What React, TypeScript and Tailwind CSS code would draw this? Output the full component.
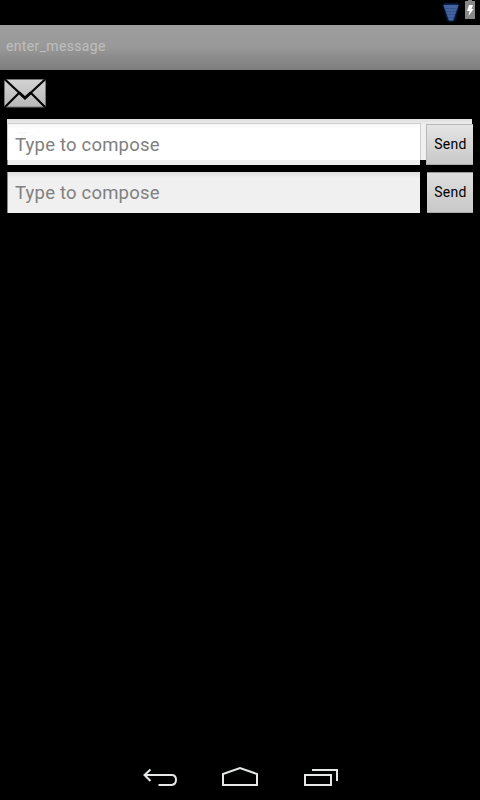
function StatusBar() {
  return (
    <header className="flex h-[25px] items-start justify-end bg-black">
      <svg width="40" height="25" viewBox="440 0 40 25">
        <defs>
          <filter id="glow" x="-50%" y="-50%" width="200%" height="200%">
            <feGaussianBlur stdDeviation="1.2" />
          </filter>
        </defs>
        <path d="M443 4H459L454 21H448Z" fill="#163b78" filter="url(#glow)" />
        <path d="M443.5 5H458.5L453 20.5H449Z" fill="#45639f" />
        <path d="M444.5 8.5H457.5M446 11.5H456M447 14.5H455M448 17.5H454" stroke="#345490" />
        <path d="M468 0H472V1H475V19H465V1H468Z" fill="#888" />
        <path d="M469 5H473L471.5 9H473.5L468.5 16L469.5 11H467Z" fill="#fff" />
      </svg>
    </header>
  );
}

function MailIcon() {
  return (
    <svg className="block" width="50" height="49" viewBox="0 70 50 49">
      <defs>
        <linearGradient id="mail" x1="0" y1="0" x2="0" y2="1">
          <stop stopColor="#d2d2d2" />
          <stop offset="1" stopColor="#b9b9b9" />
        </linearGradient>
      </defs>
      <rect x="4.5" y="79.5" width="41" height="27.5" rx="1.5" fill="url(#mail)" stroke="#777" />
      <path d="M5 79.5L25 98L45 79.5M5 107L19 93M45 107L31 93" fill="none" stroke="#050505" strokeWidth="2.2" />
      <path d="M19 92.5L25 98L31 92.5" fill="none" stroke="#050505" strokeWidth="2.8" />
    </svg>
  );
}

function ComposeRow({ bright = false }: { bright?: boolean }) {
  return (
    <div className="relative flex h-[41px] gap-[7px] pr-[7px] pl-2">
      <div
        className={
          bright
            ? "relative flex w-[412px] items-center bg-linear-to-b from-[#f8f8f8] via-white via-15% to-white pt-0.5 pl-[7px]"
            : "flex w-[412px] items-center bg-linear-to-b from-[#dedede] via-[#f0f0f0] via-15% to-[#f0f0f0] pt-0.5 pl-[7px] shadow-[-1px_0_0_#888]"
        }
      >
        {bright && (
          <>
            <span className="absolute -top-px -left-px h-[37px] w-[414px] border-x border-t border-[#cecece]" />
            <span className="absolute bottom-0 -left-px h-[5px] w-[413px] border-l border-[#888] bg-[#f0f0f0]" />
            <span className="absolute top-[6px] left-[9px] text-[18px] leading-none text-[#f9f9f9]">To</span>
          </>
        )}
        <span className="relative z-10 text-[18.5px] leading-none tracking-[0.2px] whitespace-nowrap text-[#808080]">Type to compose</span>
      </div>
      <button
        className={
          bright
            ? "w-[46px] bg-linear-to-b from-[#e5e5e5] to-[#c8c8c8] pb-0.5 pl-px text-[14px] leading-none tracking-[0.3px] text-black shadow-[-1px_0_0_#b8b8b8,inset_0_1px_0_#b8b8b8,inset_0_-1px_0_#aaa]"
            : "w-[46px] bg-linear-to-b from-[#dedede] to-[#c8c8c8] pb-0.5 pl-px text-[14px] leading-none tracking-[0.3px] text-black shadow-[inset_0_1px_0_#999,inset_0_-1px_0_#aaa]"
        }
      >
        Send
      </button>
    </div>
  );
}

function NavigationBar() {
  return (
    <nav className="flex h-12 justify-center bg-black">
      <svg width="240" height="48" viewBox="120 752 240 48" fill="none" stroke="#e6e8e8" strokeWidth="2">
        <path d="M150.5 769.5L144.5 775L150.5 781M145 775H171.5Q176 775 176 779.8T171.5 785H158.5" />
        <path d="M223 785V774L240 768L257 774V785Z" />
        <path d="M305 775H331V785H305ZM312 770H337V781" />
      </svg>
    </nav>
  );
}

export default function App() {
  return (
    <div className="flex h-[800px] w-[480px] flex-col overflow-hidden bg-black font-['Roboto',sans-serif]">
      <StatusBar />
      <div className="flex h-[45px] items-center bg-linear-to-b from-[#9e9e9e] via-[#989898] via-50% to-[#7d7d7d] pb-[3px] pl-1.5">
        <h1 className="text-[14px] leading-none tracking-[0.35px] text-[#bebebe]">enter_message</h1>
      </div>
      <div className="h-[49px]">
        <MailIcon />
      </div>
      <main className="relative flex flex-1 flex-col gap-[7px] pt-[5px]">
        <div className="absolute top-0 left-[7px] h-[41px] w-[465px] bg-linear-to-b from-[#dedede] via-[#f0f0f0] via-15% to-[#f0f0f0]" />
        <ComposeRow bright />
        <ComposeRow />
      </main>
      <NavigationBar />
    </div>
  );
}
